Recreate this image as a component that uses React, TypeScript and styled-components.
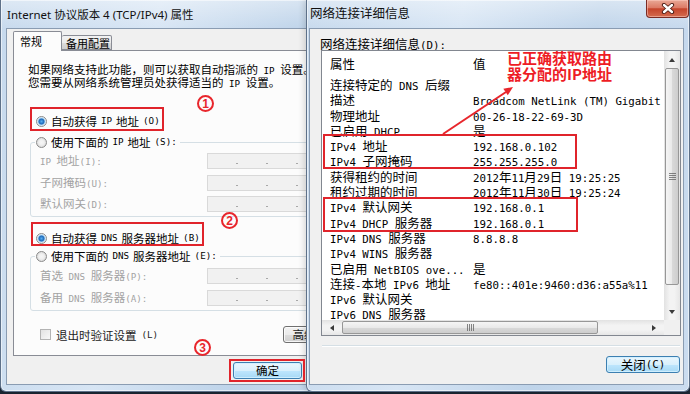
import React from "react";
import styled, { createGlobalStyle } from "styled-components";

const CJK = `"Noto Sans CJK SC", "Noto Sans CJK JP", sans-serif`;

const GlobalStyle = createGlobalStyle`
  html, body { margin: 0; padding: 0; }
  body { background: #1d2937; font-family: ${CJK}; }
  * { box-sizing: border-box; }
`;

const Desktop = styled.div`
  position: relative;
  width: 690px;
  height: 394px;
  overflow: hidden;
  background: linear-gradient(180deg, #33485e 0%, #1b2633 100%);
`;

const Window = styled.div<{ $left: number; $width: number; $z: number; $pl: number }>`
  position: absolute;
  top: 0;
  left: ${(p) => p.$left}px;
  width: ${(p) => p.$width}px;
  height: 392px;
  z-index: ${(p) => p.$z};
  display: flex;
  flex-direction: column;
  padding: 0 5px 6px ${(p) => p.$pl}px;
  border: 1px solid #5e7189;
  border-top: none;
  border-radius: 0 0 6px 6px;
  background:
    linear-gradient(180deg, rgba(255, 255, 255, 0.4) 0, rgba(255, 255, 255, 0) 30px),
    linear-gradient(100deg, #c6d9ed 0%, #d7e5f4 35%, #bfd4ea 65%, #cbdcef 100%);
  box-shadow: inset 0 0 0 1px rgba(255, 255, 255, 0.55), -2px 0 6px rgba(0, 0, 0, 0.15);
`;

const TitleBar = styled.div<{ $pb: number; $size: number }>`
  height: 28px;
  flex: none;
  display: flex;
  align-items: center;
  padding: 0 0 ${(p) => p.$pb}px 1px;
  font-family: "Noto Sans", ${CJK};
  font-size: ${(p) => p.$size}px;
  color: #111;
  white-space: nowrap;
  position: relative;
`;

const CloseBtn = styled.div`
  margin-left: auto;
  margin-right: -5px;
  align-self: flex-start;
  width: 43px;
  height: 18px;
  border: 1px solid #7a2b23;
  border-top: none;
  border-radius: 0 0 4px 4px;
  background: linear-gradient(180deg, #e9a896 0%, #dc7b66 45%, #c5442b 52%, #d46c4f 100%);
  box-shadow: inset 0 0 0 1px rgba(255, 210, 200, 0.5);
  display: flex;
  align-items: center;
  justify-content: center;
`;

const Client = styled.div<{ $size: number; $latin: number }>`
  flex: 1;
  min-height: 0;
  display: flex;
  flex-direction: column;
  background: #f0f0f0;
  border: 1px solid #8a9cb2;
  font-size: ${(p) => p.$size}px;
  line-height: 16px;
  color: #000;
  --latin: ${(p) => p.$latin}em;
`;

const Latin = styled.span`
  font-family: "DejaVu Sans Mono", "Liberation Mono", monospace;
  font-size: var(--latin, 0.86em);
`;

const Sim = ({ t }: { t: string }) => (
  <>
    {t
      .split(/([\x20-\x7E]+)/)
      .filter(Boolean)
      .map((p, i) =>
        /^[\x20-\x7E]+$/.test(p) ? (
          <Latin key={i}>{p}</Latin>
        ) : (
          <React.Fragment key={i}>{p}</React.Fragment>
        )
      )}
  </>
);

/* ---------- left dialog ---------- */

const TabStrip = styled.div`
  display: flex;
  align-items: flex-end;
  height: 19px;
  margin: 2px 0 0 6px;
  position: relative;
  z-index: 1;
`;

const Tab = styled.div<{ $active?: boolean }>`
  height: ${(p) => (p.$active ? 20 : 15)}px;
  width: ${(p) => (p.$active ? 49 : 50)}px;
  margin-bottom: ${(p) => (p.$active ? -1 : 0)}px;
  padding: ${(p) => (p.$active ? "0 0 2px 6px" : "1px 0 0 4px")};
  display: flex;
  align-items: center;
  font-size: 11px;
  border: 1px solid #898c95;
  border-bottom: ${(p) => (p.$active ? "none" : "1px solid #898c95")};
  border-left: ${(p) => (p.$active ? "1px solid #898c95" : "none")};
  border-radius: 2px 2px 0 0;
  background: ${(p) =>
    p.$active ? "#fcfcfc" : "linear-gradient(180deg, #f2f2f2 0%, #ebebeb 50%, #dcdcdc 51%, #cfcfcf 100%)"};
  white-space: nowrap;
`;

const TabPanel = styled.div`
  width: 359px;
  height: 306px;
  margin-left: 6px;
  flex: none;
  border: 1px solid #898c95;
  background: #fcfcfc;
  display: flex;
  flex-direction: column;
`;

const Desc = styled.div`
  margin: 13px 0 0 14px;
  line-height: 11.5px;
`;

const Line = styled.div`
  white-space: nowrap;
`;

const OptionRow = styled.div<{ $mt: number }>`
  margin: ${(p) => p.$mt}px 0 0 22px;
  height: 16px;
  display: flex;
  align-items: center;
  gap: 4px;
  white-space: nowrap;
`;

const Radio = styled.span<{ $checked?: boolean }>`
  flex: none;
  width: 11px;
  height: 11px;
  border-radius: 50%;
  border: 1px solid #8a8a8a;
  background: ${(p) =>
    p.$checked
      ? "radial-gradient(circle, #56aef0 0, #1d67b8 2.6px, #a9d3f1 3.4px, #eef5fb 4.5px)"
      : "radial-gradient(circle, #f6f6f6 0, #f0f0f0 2.5px, #d8d8d8 5px)"};
`;

const Group = styled.fieldset<{ $mt: number }>`
  margin: ${(p) => p.$mt}px 0 0 16px;
  padding: 0 10px 5px 9px;
  border: 1px solid #d5dfe5;
  border-radius: 3px;
  min-width: 0;
  width: 339px;
`;

const Legend = styled.legend`
  margin-left: -5px;
  padding: 0 3px 0 1px;
  height: 16px;
  display: flex;
  align-items: center;
  gap: 4px;
  white-space: nowrap;
`;

const GroupBody = styled.div<{ $pt: number }>`
  padding-top: ${(p) => p.$pt}px;
  display: flex;
  flex-direction: column;
  gap: 5.5px;
`;

const FieldRow = styled.div`
  display: grid;
  grid-template-columns: 167px 151px;
  height: 16px;
  align-items: center;
`;

const FieldLabel = styled.span`
  color: #a3a3a3;
  white-space: nowrap;
`;

const IpBox = styled.div`
  height: 16px;
  border: 1px solid #d9d9d9;
  background: #f1f1f1;
  display: grid;
  grid-template-columns: repeat(3, 28px 2px) 1fr;
  align-items: end;
  padding-bottom: 4px;
`;

const IpDot = styled.span`
  height: 1px;
  background: #a8a8a8;
`;

const CheckRow = styled.div`
  margin: 15px 13px 0 26px;
  height: 18px;
  display: flex;
  align-items: center;
  gap: 5px;
  white-space: nowrap;
  color: #222;
`;

const CheckBox = styled.span`
  flex: none;
  width: 11px;
  height: 11px;
  border: 1px solid #b3b3b3;
  background: linear-gradient(135deg, #e2e2e2, #f8f8f8);
`;

const Btn = styled.div<{ $w: number; $primary?: boolean }>`
  flex: none;
  width: ${(p) => p.$w}px;
  height: 17px;
  display: flex;
  align-items: center;
  justify-content: center;
  white-space: nowrap;
  overflow: hidden;
  border: 1px solid ${(p) => (p.$primary ? "#3c7fb1" : "#707070")};
  border-radius: 3px;
  background: ${(p) =>
    p.$primary
      ? "linear-gradient(180deg, #eaf6fd 0%, #d9f0fc 50%, #bee6fd 51%, #a7d9f5 100%)"
      : "linear-gradient(180deg, #f2f2f2 0%, #ebebeb 50%, #dddddd 51%, #cfcfcf 100%)"};
  box-shadow: inset 0 0 0 1px ${(p) => (p.$primary ? "rgba(210,240,255,0.9)" : "rgba(255,255,255,0.8)")};
  line-height: 15px;
`;

const AdvBtn = styled(Btn)`
  margin-left: auto;
`;

const ButtonRow = styled.div`
  display: flex;
  gap: 6px;
  margin: 6px 0 0 226px;
`;

/* ---------- right dialog ---------- */

const DetailLabel = styled.div`
  margin: 8px 0 0 10px;
  height: 13px;
  line-height: 13px;
  white-space: nowrap;
`;

const ListBox = styled.div`
  margin-left: 11px;
  width: 360px;
  height: 286px;
  flex: none;
  border: 1px solid #828790;
  background: #fff;
  display: grid;
  grid-template-columns: 1fr 16px;
  grid-template-rows: 1fr 15px;
`;

const ListContent = styled.div`
  overflow: hidden;
  padding-left: 8px;
`;

const ListRow = styled.div<{ $h: number }>`
  display: grid;
  grid-template-columns: 143px 1fr;
  height: ${(p) => p.$h}px;
  line-height: ${(p) => p.$h}px;
  white-space: nowrap;
`;

const Cell = styled.span`
  overflow: hidden;
`;

const VScroll = styled.div`
  display: flex;
  flex-direction: column;
  background: linear-gradient(90deg, #e2e2e2 0%, #f3f3f3 35%, #f3f3f3 65%, #e6e6e6 100%);
`;

const HScroll = styled.div`
  display: flex;
  background: linear-gradient(180deg, #e2e2e2 0%, #f3f3f3 35%, #f3f3f3 65%, #e6e6e6 100%);
`;

const Corner = styled.div`
  background: #f0f0f0;
`;

const ScrollBtn = styled.div<{ $w: number; $h: number; $end?: boolean; $vertical?: boolean }>`
  flex: none;
  width: ${(p) => p.$w}px;
  height: ${(p) => p.$h}px;
  display: flex;
  align-items: center;
  justify-content: center;
  ${(p) => (p.$end ? (p.$vertical ? "margin-top: auto;" : "margin-left: auto;") : "")}
`;

const Tri = styled.span<{ $dir: "up" | "down" | "left" | "right" }>`
  width: 0;
  height: 0;
  ${(p) =>
    p.$dir === "up"
      ? "border-left:3.5px solid transparent;border-right:3.5px solid transparent;border-bottom:4px solid #3a3a3a;"
      : p.$dir === "down"
      ? "border-left:3.5px solid transparent;border-right:3.5px solid transparent;border-top:4px solid #3a3a3a;"
      : p.$dir === "left"
      ? "border-top:3.5px solid transparent;border-bottom:3.5px solid transparent;border-right:4px solid #3a3a3a;"
      : "border-top:3.5px solid transparent;border-bottom:3.5px solid transparent;border-left:4px solid #3a3a3a;"}
`;

const VThumb = styled.div`
  flex: none;
  height: 217px;
  margin: 0 1px;
  border: 1px solid #979797;
  border-radius: 2px;
  background: linear-gradient(90deg, #f5f5f5 0%, #e9e9e9 50%, #d9d9d9 51%, #cdcdcd 100%);
  display: flex;
  align-items: center;
  justify-content: center;
`;

const HThumb = styled.div`
  flex: none;
  width: 256px;
  margin: 1px 0;
  border: 1px solid #979797;
  border-radius: 2px;
  background: linear-gradient(180deg, #f5f5f5 0%, #e9e9e9 50%, #d9d9d9 51%, #cdcdcd 100%);
  display: flex;
  align-items: center;
  justify-content: center;
`;

const Grip = styled.span<{ $vertical?: boolean }>`
  width: 7px;
  height: 7px;
  background: ${(p) =>
    p.$vertical
      ? "repeating-linear-gradient(180deg, #5f5f5f 0 1px, transparent 1px 2px)"
      : "repeating-linear-gradient(90deg, #5f5f5f 0 1px, transparent 1px 2px)"};
  opacity: 0.75;
`;

const Separator = styled.div`
  margin: 9px 0 0 12px;
  width: 358px;
  height: 2px;
  border-top: 1px solid #d5dfe5;
  border-bottom: 1px solid #ffffff;
`;

const Footer = styled.div`
  display: flex;
  margin: 9px 3px 0 0;
`;

const FooterBtn = styled(Btn)`
  margin-left: auto;
`;

/* ---------- annotations ---------- */

const RedBox = styled.div<{ $x: number; $y: number; $w: number; $h: number }>`
  position: absolute;
  left: ${(p) => p.$x}px;
  top: ${(p) => p.$y}px;
  width: ${(p) => p.$w}px;
  height: ${(p) => p.$h}px;
  border: 2px solid #e0242b;
  z-index: 5;
`;

const Marker = styled.div<{ $x: number; $y: number }>`
  position: absolute;
  left: ${(p) => p.$x}px;
  top: ${(p) => p.$y}px;
  width: 17px;
  height: 17px;
  border: 2px solid #e8262c;
  border-radius: 50%;
  display: flex;
  align-items: center;
  justify-content: center;
  font: bold 12px/1 "Liberation Sans", Arial, sans-serif;
  color: #e8262c;
  z-index: 5;
`;

const Callout = styled.div`
  position: absolute;
  left: 507px;
  top: 50px;
  z-index: 5;
  color: #ee1c25;
  font: bold 15px/15.5px ${CJK};
  white-space: nowrap;
`;

const ArrowSvg = styled.svg`
  position: absolute;
  left: 436px;
  top: 80px;
  z-index: 5;
`;

const ipFields = ["IP 地址(I):", "子网掩码(U):", "默认网关(D):"];
const dnsFields = ["首选 DNS 服务器(P):", "备用 DNS 服务器(A):"];

const details: [string, string][] = [
  ["连接特定的 DNS 后缀", ""],
  ["描述", "Broadcom NetLink (TM) Gigabit"],
  ["物理地址", "00-26-18-22-69-3D"],
  ["已启用 DHCP", "是"],
  ["IPv4 地址", "192.168.0.102"],
  ["IPv4 子网掩码", "255.255.255.0"],
  ["获得租约的时间", "2012年11月29日 19:25:25"],
  ["租约过期的时间", "2012年11月30日 19:25:24"],
  ["IPv4 默认网关", "192.168.0.1"],
  ["IPv4 DHCP 服务器", "192.168.0.1"],
  ["IPv4 DNS 服务器", "8.8.8.8"],
  ["IPv4 WINS 服务器", ""],
  ["已启用 NetBIOS ove...", "是"],
  ["连接-本地 IPv6 地址", "fe80::401e:9460:d36:a55a%11"],
  ["IPv6 默认网关", ""],
  ["IPv6 DNS 服务器", ""],
];

const IpField = () => (
  <IpBox>
    <span />
    <IpDot />
    <span />
    <IpDot />
    <span />
    <IpDot />
    <span />
  </IpBox>
);

export default function App() {
  return (
    <>
      <GlobalStyle />
      <Desktop>
        <Window $left={0} $width={392} $z={1} $pl={5}>
          <TitleBar $pb={1} $size={11.5}>
            Internet 协议版本 4 (TCP/IPv4) 属性
          </TitleBar>
          <Client $size={11.5} $latin={0.8}>
            <TabStrip>
              <Tab $active>常规</Tab>
              <Tab>备用配置</Tab>
            </TabStrip>
            <TabPanel>
              <Desc>
                <Line>
                  <Sim t="如果网络支持此功能，则可以获取自动指派的 IP 设置。否则，" />
                </Line>
                <Line>
                  <Sim t="您需要从网络系统管理员处获得适当的 IP 设置。" />
                </Line>
              </Desc>
              <OptionRow $mt={24}>
                <Radio $checked />
                <Sim t="自动获得 IP 地址(O)" />
              </OptionRow>
              <Group $mt={5}>
                <Legend>
                  <Radio />
                  <Sim t="使用下面的 IP 地址(S):" />
                </Legend>
                <GroupBody $pt={2}>
                  {ipFields.map((l) => (
                    <FieldRow key={l}>
                      <FieldLabel>
                        <Sim t={l} />
                      </FieldLabel>
                      <IpField />
                    </FieldRow>
                  ))}
                </GroupBody>
              </Group>
              <OptionRow $mt={13}>
                <Radio $checked />
                <Sim t="自动获得 DNS 服务器地址(B)" />
              </OptionRow>
              <Group $mt={2}>
                <Legend>
                  <Radio />
                  <Sim t="使用下面的 DNS 服务器地址(E):" />
                </Legend>
                <GroupBody $pt={3}>
                  {dnsFields.map((l) => (
                    <FieldRow key={l}>
                      <FieldLabel>
                        <Sim t={l} />
                      </FieldLabel>
                      <IpField />
                    </FieldRow>
                  ))}
                </GroupBody>
              </Group>
              <CheckRow>
                <CheckBox />
                <Sim t="退出时验证设置(L)" />
                <AdvBtn $w={75}>
                  <Sim t="高级(V)..." />
                </AdvBtn>
              </CheckRow>
            </TabPanel>
            <ButtonRow>
              <Btn $w={69} $primary>
                确定
              </Btn>
              <Btn $w={69}>取消</Btn>
            </ButtonRow>
          </Client>
        </Window>

        <Window $left={306} $width={384} $z={2} $pl={2}>
          <TitleBar $pb={4} $size={12.5}>
            网络连接详细信息
            <CloseBtn>
              <svg width="14" height="11" viewBox="0 0 14 11">
                <path d="M3 2 L11 9 M11 2 L3 9" stroke="#4a1a12" strokeWidth="4.2" strokeLinecap="round" />
                <path d="M3 2 L11 9 M11 2 L3 9" stroke="#ffffff" strokeWidth="2.4" strokeLinecap="round" />
              </svg>
            </CloseBtn>
          </TitleBar>
          <Client $size={12.5} $latin={0.86}>
            <DetailLabel>
              <Sim t="网络连接详细信息(D):" />
            </DetailLabel>
            <ListBox>
              <ListContent>
                <ListRow $h={26}>
                  <Cell>属性</Cell>
                  <Cell>值</Cell>
                </ListRow>
                {details.map(([k, v]) => (
                  <ListRow $h={15.3} key={k}>
                    <Cell>
                      <Sim t={k} />
                    </Cell>
                    <Cell>
                      <Sim t={v} />
                    </Cell>
                  </ListRow>
                ))}
              </ListContent>
              <VScroll>
                <ScrollBtn $w={16} $h={17}>
                  <Tri $dir="up" />
                </ScrollBtn>
                <VThumb>
                  <Grip $vertical />
                </VThumb>
                <ScrollBtn $w={16} $h={17} $end $vertical>
                  <Tri $dir="down" />
                </ScrollBtn>
              </VScroll>
              <HScroll>
                <ScrollBtn $w={20} $h={15}>
                  <Tri $dir="left" />
                </ScrollBtn>
                <HThumb>
                  <Grip />
                </HThumb>
                <ScrollBtn $w={20} $h={15} $end>
                  <Tri $dir="right" />
                </ScrollBtn>
              </HScroll>
              <Corner />
            </ListBox>
            <Separator />
            <Footer>
              <FooterBtn $w={74} $primary>
                <Sim t="关闭(C)" />
              </FooterBtn>
            </Footer>
          </Client>
        </Window>

        <RedBox $x={30} $y={107} $w={134} $h={24} />
        <RedBox $x={31} $y={222} $w={173} $h={24} />
        <RedBox $x={229} $y={359} $w={76} $h={23} />
        <RedBox $x={323} $y={134} $w={254} $h={35} />
        <RedBox $x={323} $y={197} $w={255} $h={35} />

        <Marker $x={197} $y={95}>1</Marker>
        <Marker $x={221} $y={212}>2</Marker>
        <Marker $x={194} $y={339}>3</Marker>

        <Callout>
          <div>已正确获取路由</div>
          <div>器分配的IP地址</div>
        </Callout>
        <ArrowSvg width="84" height="60" viewBox="0 0 84 60">
          <line x1="7" y1="54" x2="70" y2="12" stroke="#e8262c" strokeWidth="2" />
          <polygon points="77,7 71.8,15.3 67.3,8.7" fill="#e8262c" />
        </ArrowSvg>
      </Desktop>
    </>
  );
}
